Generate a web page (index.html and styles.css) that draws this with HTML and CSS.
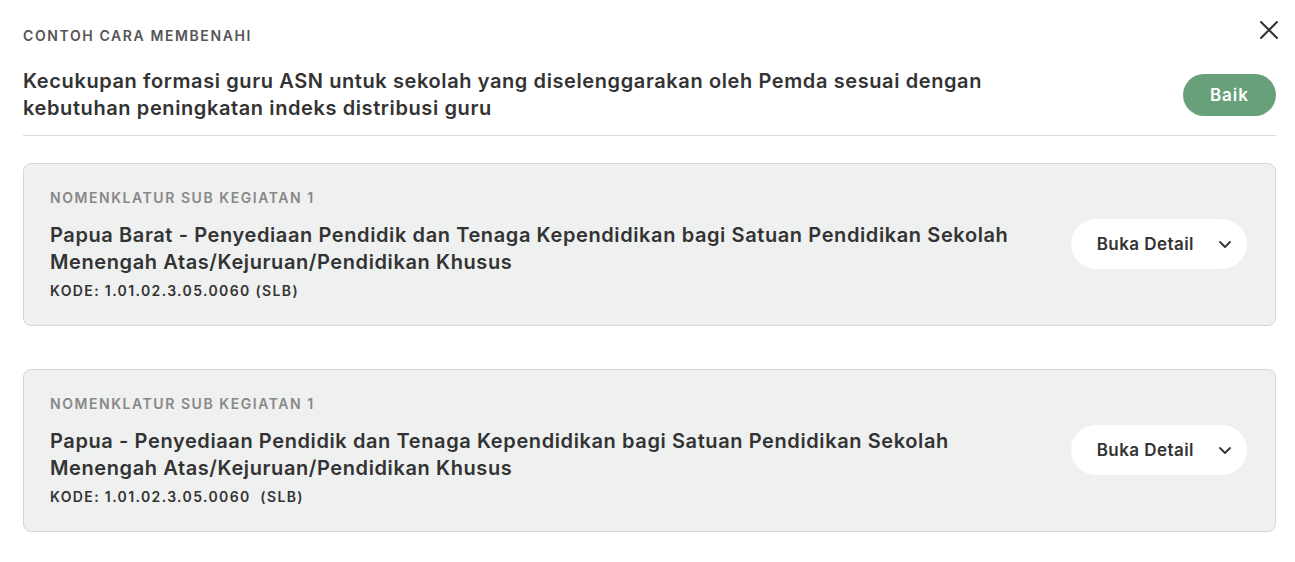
FILE: index.html
```html
<!DOCTYPE html>
<html lang="id">
<head>
  <meta charset="UTF-8">
  <meta name="viewport" content="width=device-width, initial-scale=1.0">
  <title>Contoh Cara Membenahi</title>
  <link rel="stylesheet" href="styles.css">
</head>
<body>
  <div class="modal">
    <div class="top">
      <span class="eyebrow">CONTOH CARA MEMBENAHI</span>
      <button class="close" aria-label="Tutup">
        <svg width="20" height="20" viewBox="0 0 20 20"><path d="M2 2 L18 18 M18 2 L2 18" stroke="#333" stroke-width="2" stroke-linecap="round"/></svg>
      </button>
    </div>

    <div class="head">
      <h1>Kecukupan formasi guru ASN untuk sekolah yang diselenggarakan oleh Pemda sesuai dengan kebutuhan peningkatan indeks distribusi guru</h1>
      <span class="badge">Baik</span>
    </div>

    <div class="list">
      <div class="card">
        <div class="card-text">
          <div class="card-label">NOMENKLATUR SUB KEGIATAN 1</div>
          <h2>Papua Barat - Penyediaan Pendidik dan Tenaga Kependidikan bagi Satuan Pendidikan Sekolah Menengah Atas/Kejuruan/Pendidikan Khusus</h2>
          <div class="kode">KODE: 1.01.02.3.05.0060 (SLB)</div>
        </div>
        <button class="detail">Buka Detail
          <svg width="14" height="9" viewBox="0 0 14 9"><path d="M2 2 L7 7 L12 2" fill="none" stroke="#333" stroke-width="1.8" stroke-linecap="round" stroke-linejoin="round"/></svg>
        </button>
      </div>

      <div class="card">
        <div class="card-text">
          <div class="card-label">NOMENKLATUR SUB KEGIATAN 1</div>
          <h2>Papua - Penyediaan Pendidik dan Tenaga Kependidikan bagi Satuan Pendidikan Sekolah Menengah Atas/Kejuruan/Pendidikan Khusus</h2>
          <div class="kode">KODE: 1.01.02.3.05.0060&nbsp; (SLB)</div>
        </div>
        <button class="detail">Buka Detail
          <svg width="14" height="9" viewBox="0 0 14 9"><path d="M2 2 L7 7 L12 2" fill="none" stroke="#333" stroke-width="1.8" stroke-linecap="round" stroke-linejoin="round"/></svg>
        </button>
      </div>
    </div>
  </div>
</body>
</html>
```

FILE: styles.css
```css
body {
  font-family: 'Inter', 'Noto Sans', sans-serif;
  background: #fff;
  color: #333;
  margin: 0;
}
.modal {
  padding: 20px 19px 30px 23px;
}
.top {
  display: flex;
  justify-content: space-between;
  align-items: flex-start;
}
.eyebrow {
  margin-top: 7px;
  font-size: 14px;
  font-weight: 600;
  color: #555;
  letter-spacing: 1.6px;
}
.close {
  background: none;
  border: 0;
  padding: 0;
  margin-right: -3px;
  width: 20px;
  height: 20px;
  cursor: pointer;
}
.head {
  display: flex;
  justify-content: space-between;
  align-items: center;
  margin-top: 24px;
  padding-bottom: 13px;
  border-bottom: 1px solid #dcdcdc;
}
.head h1 {
  margin: 0;
  max-width: 980px;
  font-size: 20px;
  line-height: 27px;
  font-weight: 600;
  letter-spacing: 0.6px;
  color: #333;
}
.badge {
  background: #68a179;
  color: #fff;
  font-size: 17px;
  font-weight: 600;
  letter-spacing: 1px;
  padding: 0 27px;
  height: 42px;
  line-height: 42px;
  border-radius: 21px;
}
.list {
  display: flex;
  flex-direction: column;
  gap: 43px;
  margin-top: 27px;
}
.card {
  display: flex;
  justify-content: space-between;
  align-items: center;
  background: #eff0f0;
  border: 1px solid #d5d6d6;
  border-radius: 8px;
  padding: 25px 28px 26px 26px;
}
.card-label {
  font-size: 14px;
  font-weight: 600;
  color: #888;
  letter-spacing: 1.55px;
}
.card h2 {
  margin: 16px 0 6px;
  max-width: 975px;
  font-size: 20px;
  line-height: 27px;
  font-weight: 600;
  letter-spacing: 0.6px;
  color: #333;
}
.kode {
  font-size: 14px;
  font-weight: 600;
  color: #333;
  letter-spacing: 1.37px;
}
.detail {
  display: flex;
  align-items: center;
  gap: 24px;
  background: #fff;
  border: 0;
  border-radius: 25px;
  height: 50px;
  padding: 0 15px 0 26px;
  font-family: inherit;
  font-size: 17px;
  font-weight: 600;
  letter-spacing: 0.45px;
  color: #333;
  cursor: pointer;
}
```
